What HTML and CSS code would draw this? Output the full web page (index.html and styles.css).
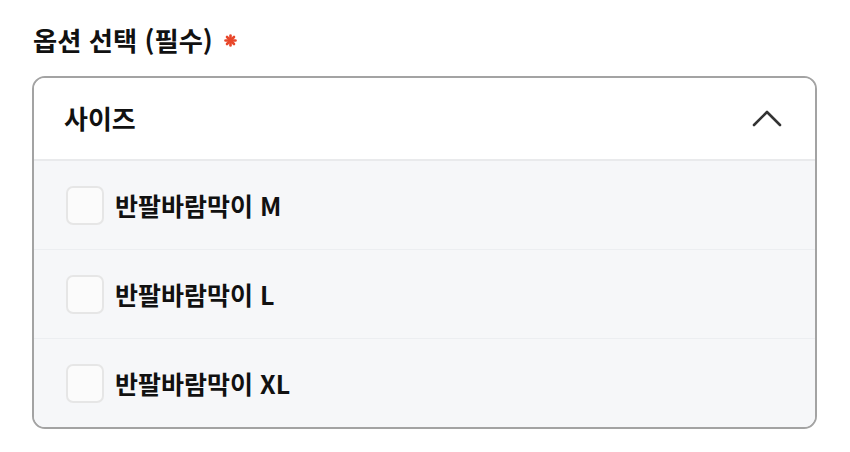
FILE: index.html
```html
<!DOCTYPE html>
<html lang="ko">
<head>
<meta charset="utf-8">
<link rel="stylesheet" href="styles.css">
</head>
<body>
<div class="wrap">
  <div class="title"><span>옵션 선택 (필수)</span><svg class="req" width="13" height="13" viewBox="0 0 13 13"><g stroke="#e8472b" stroke-width="2.6" stroke-linecap="round"><path d="M6.5 1.5V11.5"/><path d="M1.5 6.5H11.5"/><path d="M3 3L10 10"/><path d="M10 3L3 10"/></g></svg></div>
  <div class="box">
    <div class="head">
      <span class="head-label">사이즈</span>
      <svg class="chev" width="30" height="18" viewBox="0 0 30 18"><path d="M2 16 L15 3 L28 16" fill="none" stroke="#333" stroke-width="2.6" stroke-linecap="round" stroke-linejoin="round"/></svg>
    </div>
    <div class="list">
      <label class="row"><span class="cb"></span><span class="txt">반팔바람막이 M</span></label>
      <label class="row"><span class="cb"></span><span class="txt">반팔바람막이 L</span></label>
      <label class="row"><span class="cb"></span><span class="txt">반팔바람막이 XL</span></label>
    </div>
  </div>
</div>
</body>
</html>
```
FILE: styles.css
```css
html, body { margin: 0; padding: 0; background: #fff; }
body { font-family: "Noto Sans CJK KR", "Noto Sans", sans-serif; color: #111; }
.wrap { padding: 23px 32px 0 32px; width: 785px; }
.title { font-size: 26.3px; font-weight: 700; line-height: 34px; height: 34px; margin-bottom: 19px; margin-left: 1px; display: flex; align-items: center; }
.req { display: block; margin-left: 11px; margin-top: 0px; }
.box { border: 2px solid #a3a3a3; border-radius: 13px; overflow: hidden; box-sizing: border-box; width: 785px; }
.head { display: flex; align-items: center; justify-content: space-between; padding: 0 33px 2px 30px; box-sizing: border-box; height: 83px; background: #fff; border-bottom: 2px solid #e9eaec; }
.head-label { font-size: 26px; font-weight: 700; }
.chev { display: block; margin-top: 1px; }
.list { background: #f6f7f9; }
.row { height: 89px; display: flex; align-items: center; padding-left: 32px; border-top: 1px solid #eceef1; box-sizing: border-box; }
.row:first-child { border-top: none; height: 88px; }
.cb { width: 38px; height: 39px; border: 2px solid #e6e6e6; border-radius: 7px; background: #fbfbfb; box-sizing: border-box; margin-right: 11px; }
.txt { font-size: 25px; font-weight: 700; }
```
